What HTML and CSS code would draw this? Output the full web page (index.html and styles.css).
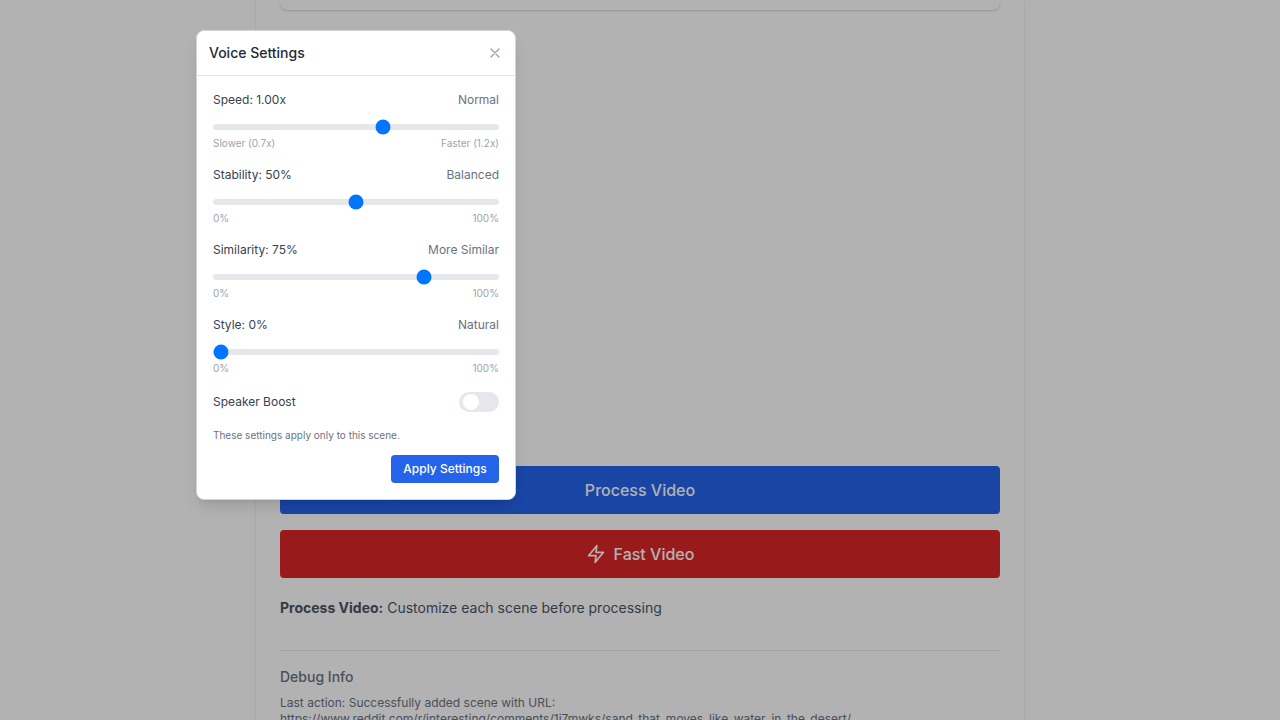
FILE: index.html
```html
<!DOCTYPE html>
<html lang="en">
<head>
<meta charset="utf-8">
<title>Voice Settings</title>
<link rel="stylesheet" href="styles.css">
</head>
<body>
<main class="page">
  <section class="scene-card"></section>
  <div class="actions">
    <button class="action action-process">Process Video</button>
    <button class="action action-fast">
      <svg class="bolt" viewBox="0 0 24 24" fill="none" stroke="currentColor" stroke-width="2" stroke-linecap="round" stroke-linejoin="round"><path d="M13 2L3 14h9l-1 8 10-12h-9l1-8z"/></svg>
      Fast Video
    </button>
  </div>
  <p class="hint"><strong>Process Video:</strong> Customize each scene before processing</p>
  <section class="debug">
    <h3 class="debug-title">Debug Info</h3>
    <p class="debug-text">Last action: Successfully added scene with URL:<br>https://www.reddit.com/r/interesting/comments/1j7mwks/sand_that_moves_like_water_in_the_desert/</p>
  </section>
</main>
<div class="overlay"></div>
<div class="modal" role="dialog">
  <header class="modal-header">
    <h2 class="modal-title">Voice Settings</h2>
    <button class="close" aria-label="Close"><svg class="close-icon" viewBox="0 0 24 24" fill="none" stroke="currentColor" stroke-width="2" stroke-linecap="round" stroke-linejoin="round"><path d="M6 18L18 6M6 6l12 12"/></svg></button>
  </header>
  <div class="modal-body">
    <div class="setting">
      <div class="row"><label class="label">Speed: 1.00x</label><span class="value">Normal</span></div>
      <input class="slider" type="range" min="0.7" max="1.2" step="0.01" value="1">
      <div class="scale"><span>Slower (0.7x)</span><span>Faster (1.2x)</span></div>
    </div>
    <div class="setting">
      <div class="row"><label class="label">Stability: 50%</label><span class="value">Balanced</span></div>
      <input class="slider" type="range" min="0" max="100" value="50">
      <div class="scale"><span>0%</span><span>100%</span></div>
    </div>
    <div class="setting">
      <div class="row"><label class="label">Similarity: 75%</label><span class="value">More Similar</span></div>
      <input class="slider" type="range" min="0" max="100" value="75">
      <div class="scale"><span>0%</span><span>100%</span></div>
    </div>
    <div class="setting">
      <div class="row"><label class="label">Style: 0%</label><span class="value">Natural</span></div>
      <input class="slider" type="range" min="0" max="100" value="0">
      <div class="scale"><span>0%</span><span>100%</span></div>
    </div>
    <div class="row boost"><span class="label">Speaker Boost</span><button class="toggle" role="switch" aria-label="Speaker Boost"><span class="knob"></span></button></div>
    <p class="note">These settings apply only to this scene.</p>
    <div class="footer"><button class="apply">Apply Settings</button></div>
  </div>
</div>
</body>
</html>
```

FILE: styles.css
```css
* { box-sizing: border-box; margin: 0; padding: 0; }
html, body { height: 720px; overflow: hidden; }
body { background: #fff; font-family: Inter, "Liberation Sans", sans-serif; position: relative; }
button { border: 0; font-family: inherit; cursor: pointer; }

.page { width: 768px; height: 800px; margin: 0 auto; padding: 0 24px; box-shadow: 0 1px 3px rgba(0,0,0,.1), 0 1px 2px -1px rgba(0,0,0,.1); }
.scene-card { height: 10px; border-radius: 0 0 8px 8px; box-shadow: 0 1px 3px rgba(0,0,0,.1), 0 1px 2px rgba(0,0,0,.08); }
.actions { display: flex; flex-direction: column; gap: 16px; margin-top: 456px; }
.action { height: 48px; display: flex; align-items: center; justify-content: center; border-radius: 4px; color: #fff; font-size: 16px; line-height: 24px; font-weight: 500; }
.action-process { background: #2563eb; }
.action-fast { background: #dc2626; gap: 8px; }
.bolt { width: 20px; height: 20px; }
.hint { margin-top: 20px; font-size: 14px; line-height: 20px; color: #4b5563; }
.debug { margin-top: 32px; padding-top: 16px; border-top: 1px solid #e5e7eb; color: #6b7280; }
.debug-title { font-size: 14px; line-height: 20px; font-weight: 500; }
.debug-text { margin-top: 8px; font-size: 12px; line-height: 16px; }

.overlay { position: absolute; inset: 0; background: rgba(0,0,0,.3); }
.modal { position: absolute; left: 196px; top: 30px; width: 320px; background: #fff; border: 1px solid #d1d5db; border-radius: 8px; box-shadow: 0 10px 15px -3px rgba(0,0,0,.1), 0 4px 6px -4px rgba(0,0,0,.1); }
.modal-header { height: 45px; padding: 0 12px; display: flex; align-items: center; justify-content: space-between; border-bottom: 1px solid #e5e7eb; }
.modal-title { font-size: 14px; line-height: 20px; font-weight: 500; color: #1f2937; }
.close { display: flex; background: none; color: #9ca3af; }
.close-icon { width: 16px; height: 16px; }
.modal-body { display: flex; flex-direction: column; gap: 16px; padding: 16px; }
.setting { display: flex; flex-direction: column; }
.row { display: flex; align-items: center; justify-content: space-between; font-size: 12px; line-height: 16px; }
.label { font-weight: 400; color: #374151; }
.value { color: #6b7280; }
.slider { appearance: none; display: block; width: 100%; height: 6px; margin: 16px 0 6px; border-radius: 4px; background: #e5e7eb; }
.scale { display: flex; justify-content: space-between; font-size: 10px; line-height: 15px; color: #9ca3af; }
.toggle { width: 40px; height: 20px; padding: 2px 4px; border-radius: 10px; background: #e5e7eb; display: flex; align-items: center; }
.knob { width: 16px; height: 16px; border-radius: 50%; background: #fff; }
.note { font-size: 10px; line-height: 15px; color: #6b7280; }
.footer { display: flex; justify-content: flex-end; margin-top: -4px; }
.apply { width: 108px; height: 28px; border-radius: 4px; background: #2563eb; color: #fff; font-size: 12px; line-height: 16px; font-weight: 550; }
```
